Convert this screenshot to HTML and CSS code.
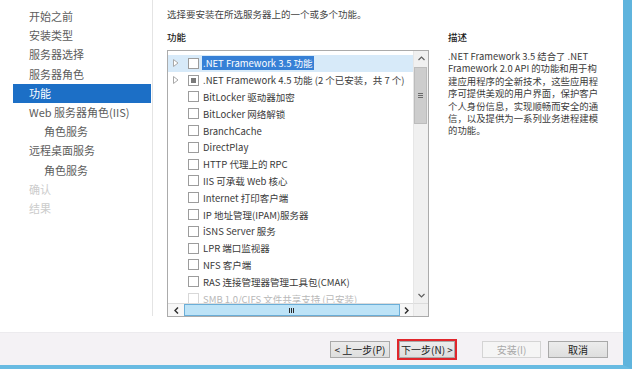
FILE: index.html
```html
<!DOCTYPE html>
<html lang="zh-CN">
<head>
<meta charset="utf-8">
<title>添加角色和功能向导</title>
<link rel="stylesheet" href="styles.css">
</head>
<body>
<div class="app">
  <div class="content">
    <nav class="nav">
      <div class="nav-item">开始之前</div>
      <div class="nav-item">安装类型</div>
      <div class="nav-item">服务器选择</div>
      <div class="nav-item">服务器角色</div>
      <div class="nav-item active">功能</div>
      <div class="nav-item">Web 服务器角色(IIS)</div>
      <div class="nav-item sub">角色服务</div>
      <div class="nav-item">远程桌面服务</div>
      <div class="nav-item sub">角色服务</div>
      <div class="nav-item disabled">确认</div>
      <div class="nav-item disabled">结果</div>
    </nav>
    <main class="main">
      <p class="intro">选择要安装在所选服务器上的一个或多个功能。</p>
      <div class="cols">
        <section class="features">
          <h2 class="label">功能</h2>
          <div class="listbox">
            <div class="rows">
              <div class="row selected"><span class="exp"><svg width="6" height="8" viewBox="0 0 6 8"><polygon points="0.5,0.5 5,4 0.5,7.5" fill="#fff" stroke="#a8a8a8" stroke-width="1"/></svg></span><span class="cb"></span><span class="txt">.NET Framework 3.5 功能</span></div>
              <div class="row"><span class="exp"><svg width="6" height="8" viewBox="0 0 6 8"><polygon points="0.5,0.5 5,4 0.5,7.5" fill="#fff" stroke="#a8a8a8" stroke-width="1"/></svg></span><span class="cb mixed"></span><span class="txt">.NET Framework 4.5 功能 (2 个已安装，共 7 个)</span></div>
              <div class="row"><span class="exp"></span><span class="cb"></span><span class="txt">BitLocker 驱动器加密</span></div>
              <div class="row"><span class="exp"></span><span class="cb"></span><span class="txt">BitLocker 网络解锁</span></div>
              <div class="row"><span class="exp"></span><span class="cb"></span><span class="txt">BranchCache</span></div>
              <div class="row"><span class="exp"></span><span class="cb"></span><span class="txt">DirectPlay</span></div>
              <div class="row"><span class="exp"></span><span class="cb"></span><span class="txt">HTTP 代理上的 RPC</span></div>
              <div class="row"><span class="exp"></span><span class="cb"></span><span class="txt">IIS 可承载 Web 核心</span></div>
              <div class="row"><span class="exp"></span><span class="cb"></span><span class="txt">Internet 打印客户端</span></div>
              <div class="row"><span class="exp"></span><span class="cb"></span><span class="txt">IP 地址管理(IPAM)服务器</span></div>
              <div class="row"><span class="exp"></span><span class="cb"></span><span class="txt">iSNS Server 服务</span></div>
              <div class="row"><span class="exp"></span><span class="cb"></span><span class="txt">LPR 端口监视器</span></div>
              <div class="row"><span class="exp"></span><span class="cb"></span><span class="txt">NFS 客户端</span></div>
              <div class="row"><span class="exp"></span><span class="cb"></span><span class="txt">RAS 连接管理器管理工具包(CMAK)</span></div>
              <div class="row faded"><span class="exp"></span><span class="cb"></span><span class="txt">SMB 1.0/CIFS 文件共享支持 (已安装)</span></div>
            </div>
            <div class="vscroll">
              <div class="sbtn"><svg width="7" height="5" viewBox="0 0 7 5"><polyline points="0.5,4 3.5,1 6.5,4" fill="none" stroke="#606060" stroke-width="1.2"/></svg></div>
              <div class="vthumb"><span class="grip-h"></span></div>
              <div class="vtrack"></div>
              <div class="sbtn"><svg width="7" height="5" viewBox="0 0 7 5"><polyline points="0.5,1 3.5,4 6.5,1" fill="none" stroke="#606060" stroke-width="1.2"/></svg></div>
            </div>
            <div class="hscroll">
              <div class="hbtn left"><svg width="5" height="7" viewBox="0 0 5 7"><polyline points="4,0.5 1,3.5 4,6.5" fill="none" stroke="#303030" stroke-width="1.5"/></svg></div>
              <div class="hthumb"><span class="grip-v"></span></div>
              <div class="hbtn right"><svg width="5" height="7" viewBox="0 0 5 7"><polyline points="1,0.5 4,3.5 1,6.5" fill="none" stroke="#303030" stroke-width="1.5"/></svg></div>
            </div>
            <div class="corner"></div>
          </div>
        </section>
        <section class="desc">
          <h2 class="label">描述</h2>
          <p class="desc-text">.NET Framework 3.5 结合了 .NET<br>Framework 2.0 API 的功能和用于构<br>建应用程序的全新技术，这些应用程<br>序可提供美观的用户界面，保护客户<br>个人身份信息，实现顺畅而安全的通<br>信，以及提供为一系列业务进程建模<br>的功能。</p>
        </section>
      </div>
    </main>
  </div>
  <footer class="footer">
    <button class="btn prev">&lt; 上一步(P)</button>
    <button class="btn next">下一步(N) &gt;</button>
    <button class="btn install" disabled>安装(I)</button>
    <button class="btn cancel">取消</button>
  </footer>
</div>
</body>
</html>
```

FILE: styles.css
```css
* { box-sizing: border-box; }
html, body {
  margin: 0;
  padding: 0;
  width: 632px;
  height: 369px;
  overflow: hidden;
  background: #ffffff;
  font-family: "Noto Sans CJK SC", "Noto Sans", sans-serif;
}
.app {
  width: 632px;
  height: 369px;
  display: flex;
  flex-direction: column;
  border-right: 9px solid #5fb4dd;
  border-bottom: 4px solid #68bbe2;
  background: #fff;
}
.content {
  height: 332px;
  display: flex;
  align-items: flex-start;
}
.nav {
  width: 153px;
  height: 316px;
  flex: none;
  border-right: 1px solid #e4e4e4;
  padding: 7px 0 0 13px;
}
.nav-item {
  width: 138px;
  height: 19.2px;
  line-height: 19.2px;
  padding-left: 16px;
  font-size: 11px;
  color: #5c5c5c;
  white-space: nowrap;
}
.nav-item.sub { padding-left: 31px; }
.nav-item.active {
  background: #1c6fc6;
  color: #ffffff;
}
.nav-item.disabled { color: #cccccc; }

.main {
  flex: 1;
  padding: 7px 0 0 14px;
  color: #3a3a3a;
  font-size: 9.5px;
}
.intro {
  margin: 0;
  line-height: 14px;
  color: #444;
  white-space: nowrap;
}
.cols {
  display: flex;
  gap: 19px;
}
.label {
  margin: 9px 0 6px;
  font-size: 9.5px;
  line-height: 14px;
  font-weight: 500;
  color: #222;
}
.features { width: 262px; flex: none; }
.listbox {
  width: 262px;
  height: 267px;
  border: 1px solid #ababab;
  display: grid;
  grid-template-columns: 1fr 15px;
  grid-template-rows: 1fr 13px;
  overflow: hidden;
}
.rows {
  overflow: hidden;
  padding-top: 4px;
  min-height: 0;
}
.row {
  height: 16.8px;
  display: flex;
  align-items: center;
  padding-left: 4px;
  white-space: nowrap;
  color: #3a3a3a;
}
.row.selected { background: #d7eaf9; }
.row.faded { color: #b8b8b8; }
.exp {
  width: 16px;
  flex: none;
  display: flex;
  align-items: center;
}
.exp svg { display: block; margin-left: 1px; }
.cb {
  width: 11px;
  height: 11px;
  flex: none;
  border: 1px solid #9c9c9c;
  background: #fff;
  margin-right: 4px;
  display: flex;
  align-items: center;
  justify-content: center;
}
.cb.mixed::after {
  content: "";
  width: 5px;
  height: 5px;
  background: #7a7a7a;
}
.row.faded .cb { border-color: #d8d8d8; }
.txt { line-height: 14px; }
.row.selected .txt {
  background: #3680d6;
  color: #fff;
  padding: 0 1px;
  margin-left: -1px;
}

.vscroll {
  grid-column: 2;
  grid-row: 1;
  background: #f0f0f0;
  border-left: 1px solid #e6e6e6;
  display: flex;
  flex-direction: column;
}
.sbtn {
  height: 15px;
  flex: none;
  display: flex;
  align-items: center;
  justify-content: center;
}
.vthumb {
  height: 57px;
  flex: none;
  margin: 1px 1px 0 0;
  background: #cdcdcd;
  border: 1px solid #bcbcbc;
  display: flex;
  align-items: center;
  justify-content: center;
}
.grip-h {
  width: 5px;
  height: 5px;
  border-top: 1px solid #6a6a6a;
  border-bottom: 1px solid #6a6a6a;
  background: linear-gradient(#cdcdcd 1px, #6a6a6a 1px, #6a6a6a 2px, #cdcdcd 2px);
}
.vtrack { flex: 1; }
.hscroll {
  grid-column: 1;
  grid-row: 2;
  display: flex;
  background: #f0f0f0;
  border-top: 1px solid #dcdcdc;
}
.hbtn {
  flex: none;
  display: flex;
  align-items: center;
  justify-content: center;
  background: #f7f7f7;
}
.hbtn.left { width: 16px; }
.hbtn.right { width: 13px; }
.hthumb {
  flex: 1;
  background: #bde3f7;
  border: 1px solid #6aaed8;
  display: flex;
  align-items: center;
  justify-content: center;
}
.grip-v {
  width: 6px;
  height: 5px;
  background: linear-gradient(90deg, #2a2a2a 1px, transparent 1px, transparent 2px, #2a2a2a 2px, #2a2a2a 3px, transparent 3px, transparent 4px, #2a2a2a 4px, #2a2a2a 5px, transparent 5px);
}
.corner {
  grid-column: 2;
  grid-row: 2;
  background: #f0f0f0;
  border-top: 1px solid #dcdcdc;
  border-left: 1px solid #e6e6e6;
}

.desc { width: 160px; flex: none; }
.desc-text {
  margin: 0;
  font-size: 9.4px;
  line-height: 12.4px;
  color: #3a3a3a;
  white-space: nowrap;
}

.footer {
  height: 33px;
  background: #f4f2f5;
  border-top: 1px solid #ecebee;
  display: flex;
  align-items: center;
  justify-content: flex-end;
  padding-right: 15px;
}
.btn {
  height: 17px;
  width: 60px;
  padding: 0;
  font-family: "Noto Sans CJK SC", "Noto Sans", sans-serif;
  font-size: 10px;
  line-height: 15px;
  color: #222;
  background: linear-gradient(#ececec, #dedede);
  border: 1px solid #a9a9a9;
  white-space: nowrap;
}
.btn.next {
  width: 56px;
  margin-left: 9px;
  outline: 2px solid #e0262c;
  outline-offset: 0px;
}
.btn.install {
  width: 59px;
  margin-left: 27px;
  color: #a8a8a8;
  background: #f5f5f5;
  border-color: #d4d4d4;
}
.btn.cancel { margin-left: 7px; }
```
